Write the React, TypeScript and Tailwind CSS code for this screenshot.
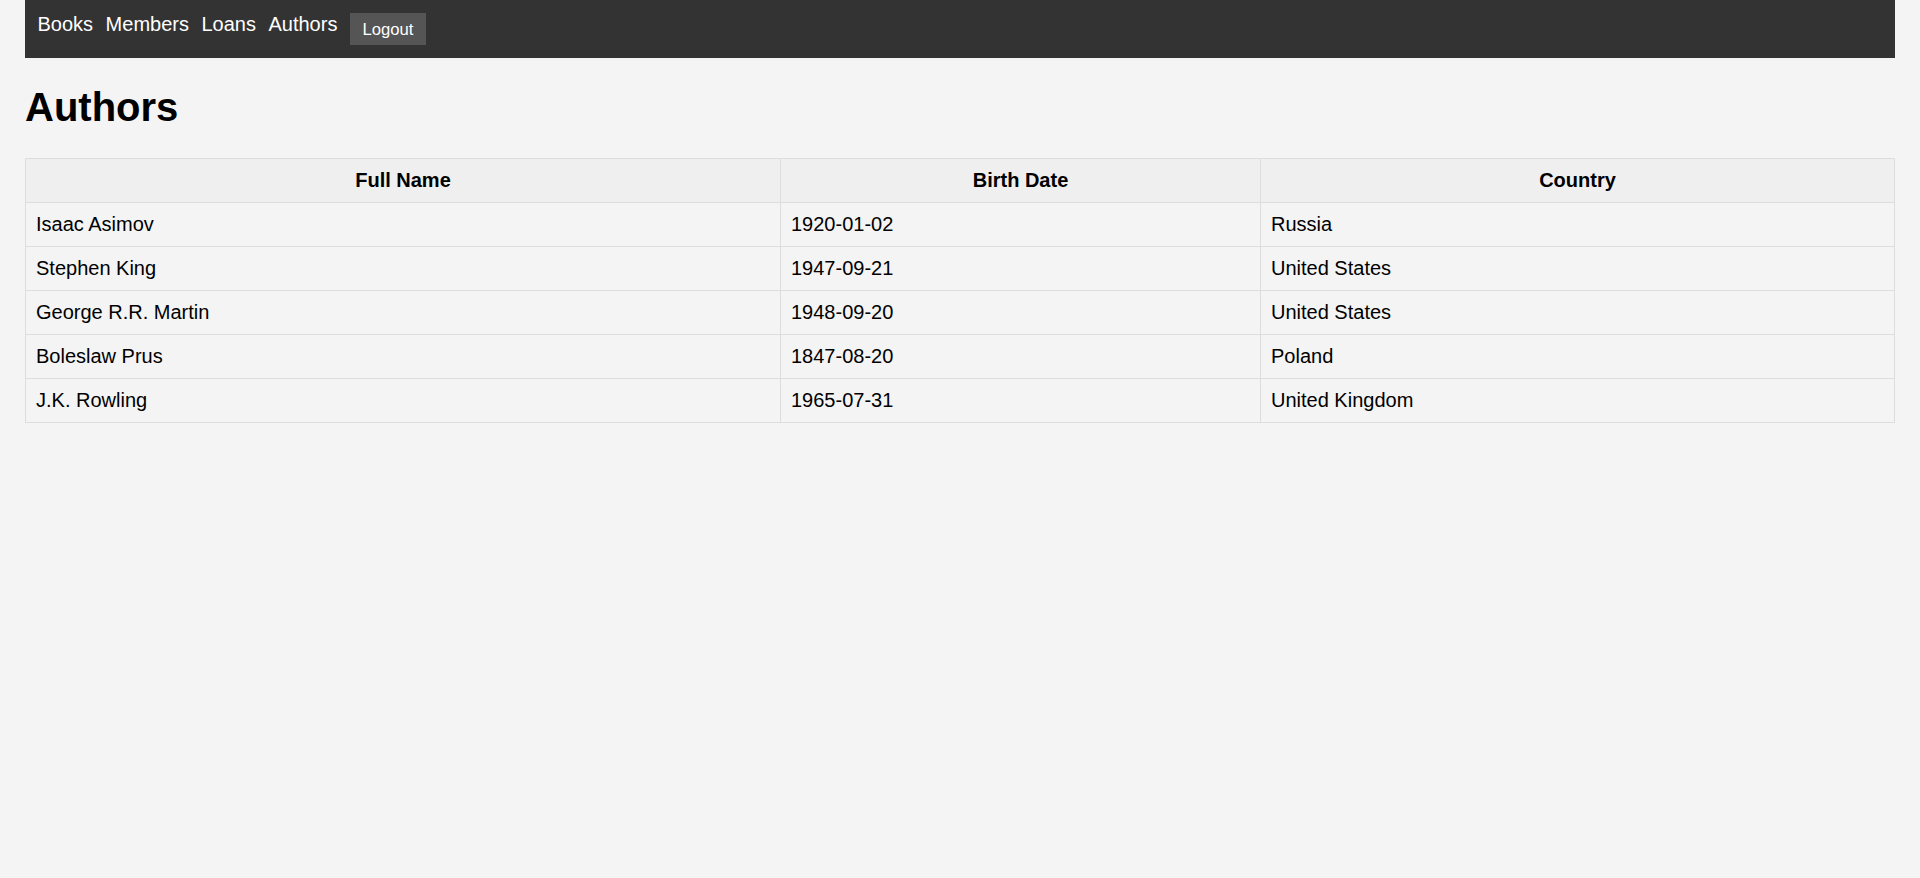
import React from 'react';

interface Author {
  id: number;
  fullName: string;
  birthDate: string;
  country: string;
}

const authors: Author[] = [
  { id: 1, fullName: 'Isaac Asimov', birthDate: '1920-01-02', country: 'Russia' },
  { id: 2, fullName: 'Stephen King', birthDate: '1947-09-21', country: 'United States' },
  { id: 3, fullName: 'George R.R. Martin', birthDate: '1948-09-20', country: 'United States' },
  { id: 4, fullName: 'Boleslaw Prus', birthDate: '1847-08-20', country: 'Poland' },
  { id: 5, fullName: 'J.K. Rowling', birthDate: '1965-07-31', country: 'United Kingdom' },
];

const links = ['Books', 'Members', 'Loans', 'Authors'];

const NavBar: React.FC = () => (
  <nav className="bg-[#333] flex items-start px-[12.5px] pt-[13px] pb-[13.5px]">
    {links.map((label) => (
      <a key={label} href="#" className="text-white text-[20px] leading-[23px] mr-[12.5px] no-underline">
        {label}
      </a>
    ))}
    <button className="bg-[#555] text-white text-[16.67px] leading-[19px] px-[12.5px] pt-[7px] pb-[5.5px] border-0">
      Logout
    </button>
  </nav>
);

export default function App() {
  return (
    <div className="min-h-screen bg-[#f4f4f4] px-[25px] font-['Liberation_Sans',Arial,sans-serif] text-black">
      <NavBar />
      <h1 className="text-[40px] font-bold leading-[46px] mt-[26px] mb-[27.5px]">Authors</h1>
      <table className="w-full border-collapse table-fixed text-[20px] leading-[23px]">
        <colgroup>
          <col className="w-[755px]" />
          <col className="w-[480px]" />
          <col />
        </colgroup>
        <thead>
          <tr>
            <th className="bg-[#efefef] border border-[#ddd] p-[10px] font-bold text-center">Full Name</th>
            <th className="bg-[#efefef] border border-[#ddd] p-[10px] font-bold text-center">Birth Date</th>
            <th className="bg-[#efefef] border border-[#ddd] p-[10px] font-bold text-center">Country</th>
          </tr>
        </thead>
        <tbody>
          {authors.map((a) => (
            <tr key={a.id}>
              <td className="border border-[#ddd] p-[10px]">{a.fullName}</td>
              <td className="border border-[#ddd] p-[10px]">{a.birthDate}</td>
              <td className="border border-[#ddd] p-[10px]">{a.country}</td>
            </tr>
          ))}
        </tbody>
      </table>
    </div>
  );
}
